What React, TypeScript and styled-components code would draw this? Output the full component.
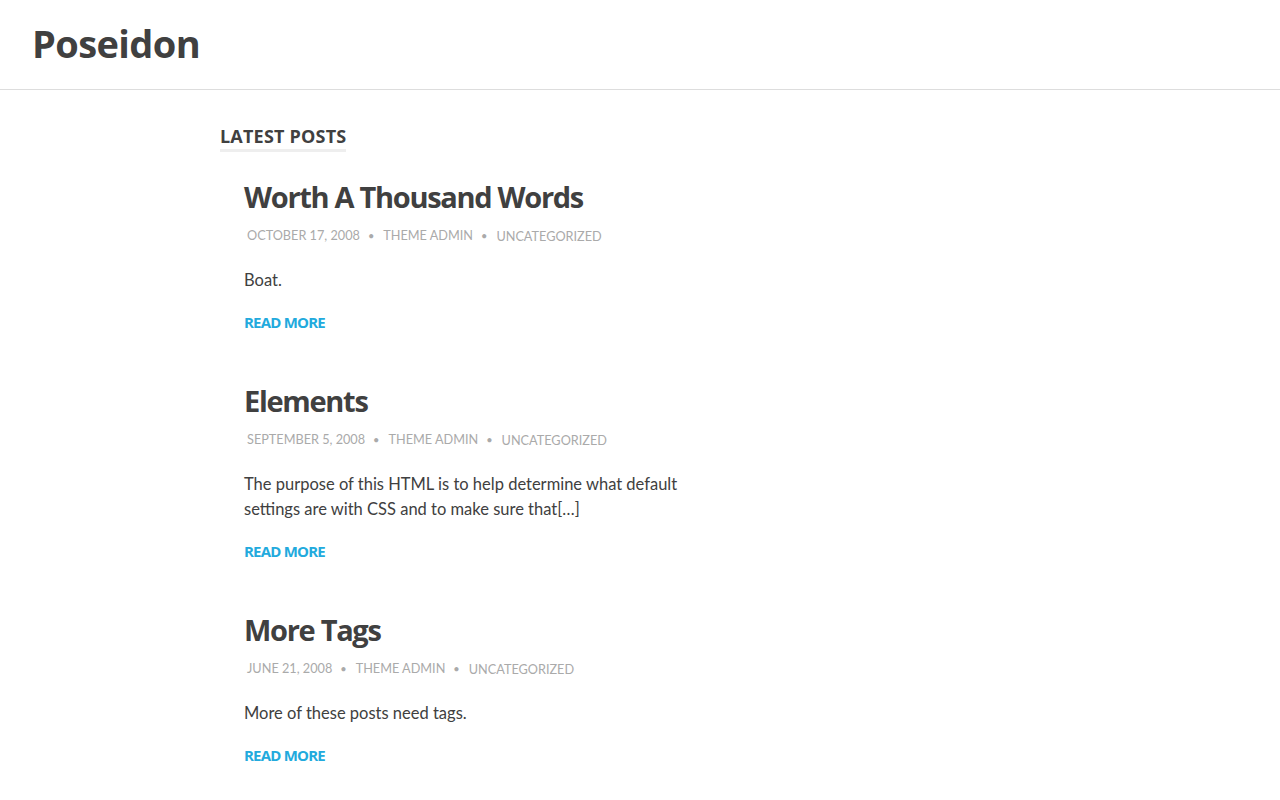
import { createGlobalStyle, styled } from "styled-components";

const posts = [
  {
    title: "Worth A Thousand Words",
    date: "October 17, 2008",
    excerpt: "Boat.",
  },
  {
    title: "Elements",
    date: "September 5, 2008",
    excerpt:
      "The purpose of this HTML is to help determine what default settings are with CSS and to make sure that[…]",
  },
  {
    title: "More Tags",
    date: "June 21, 2008",
    excerpt: "More of these posts need tags.",
  },
];

const App = () => {
  return (
    <>
      <GlobalStyle />
      <Header>
        <SiteTitle href="#">Poseidon</SiteTitle>
      </Header>
      <Main>
        <SectionTitle>Latest Posts</SectionTitle>
        {posts.map((post) => (
          <Post key={post.title}>
            <PostTitle>{post.title}</PostTitle>
            <Meta>
              <MetaItem>{post.date}</MetaItem>
              <MetaItem>Theme Admin</MetaItem>
              <MetaItem>Uncategorized</MetaItem>
            </Meta>
            <Excerpt>{post.excerpt}</Excerpt>
            <ReadMore href="#">Read More</ReadMore>
          </Post>
        ))}
      </Main>
    </>
  );
};

const GlobalStyle = createGlobalStyle`
  body {
    margin: 0;
    background: #fff;
    color: #404040;
    font-family: Lato, "Liberation Sans", sans-serif;
  }
`;

const Header = styled.header`
  display: flex;
  align-items: center;
  height: 86px;
  padding: 0 32px 3px;
  border-bottom: 1px solid #ddd;
`;

const SiteTitle = styled.a`
  font-family: "Open Sans", sans-serif;
  font-size: 38px;
  font-weight: 700;
  color: #404040;
  text-decoration: none;
  letter-spacing: -0.6px;
`;

const Main = styled.main`
  display: flex;
  flex-direction: column;
  align-items: flex-start;
  width: 480px;
  padding: 34px 0 40px 220px;
`;

const SectionTitle = styled.h2`
  margin: 0 0 24px;
  padding-bottom: 1px;
  border-bottom: 3px solid #eee;
  font-family: "Open Sans", sans-serif;
  font-size: 18px;
  font-weight: 700;
  line-height: 24px;
  text-transform: uppercase;
  color: #404040;
  letter-spacing: 0.2px;
`;

const Post = styled.article`
  display: flex;
  flex-direction: column;
  align-items: flex-start;
  padding-left: 24px;
  margin-bottom: 46px;
`;

const PostTitle = styled.h1`
  margin: 0 0 5px;
  font-family: "Open Sans", sans-serif;
  font-size: 29px;
  font-weight: 700;
  line-height: 42px;
  color: #404040;
  letter-spacing: -1.3px;
`;

const Meta = styled.div`
  display: flex;
  align-items: center;
  margin-left: 3px;
  font-size: 12.7px;
  line-height: 24px;
  text-transform: uppercase;
  color: #aaa;
`;

const MetaItem = styled.span`
  &:not(:last-child)::after {
    content: "•";
    margin: 0 9px 0 8px;
    font-size: 11px;
  }
`;

const Excerpt = styled.p`
  margin: 20px 0 17px;
  font-size: 16.5px;
  line-height: 25px;
  color: #404040;
`;

const ReadMore = styled.a`
  font-family: "Open Sans", sans-serif;
  font-size: 15px;
  font-weight: 700;
  line-height: 24px;
  text-transform: uppercase;
  text-decoration: none;
  color: #22aadd;
  letter-spacing: -0.8px;
`;

export default App;
